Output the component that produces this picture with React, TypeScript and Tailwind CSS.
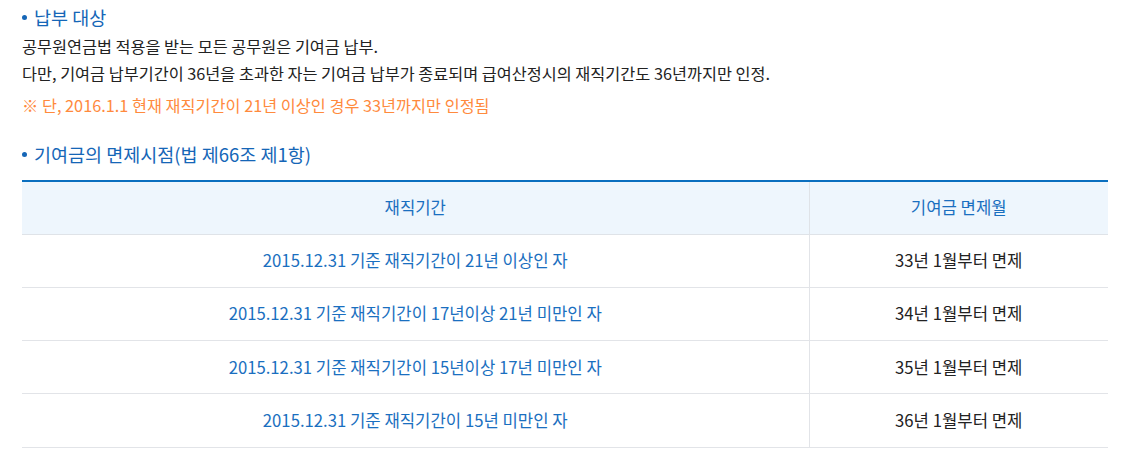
const FONT = { fontFamily: '"Noto Sans CJK KR", "Noto Sans", sans-serif' };

const ROWS = [
  ["2015.12.31 기준 재직기간이 21년 이상인 자", "33년 1월부터 면제"],
  ["2015.12.31 기준 재직기간이 17년이상 21년 미만인 자", "34년 1월부터 면제"],
  ["2015.12.31 기준 재직기간이 15년이상 17년 미만인 자", "35년 1월부터 면제"],
  ["2015.12.31 기준 재직기간이 15년 미만인 자", "36년 1월부터 면제"],
];

function Heading({ children }: { children: React.ReactNode }) {
  return (
    <h3 className="flex items-center gap-[7px] text-[18.5px] font-normal leading-[26px] text-[#1566b7]">
      <span className="h-[5px] w-[5px] rounded-full bg-[#1566b7]" />
      {children}
    </h3>
  );
}

export default function App() {
  return (
    <div className="min-h-screen bg-white px-[22px] pt-[4px]" style={FONT}>
      <Heading>납부 대상</Heading>
      <div className="mt-[3px] text-[16.3px] leading-[27px] text-[#222]">
        <p>공무원연금법 적용을 받는 모든 공무원은 기여금 납부.</p>
        <p>다만, 기여금 납부기간이 36년을 초과한 자는 기여금 납부가 종료되며 급여산정시의 재직기간도 36년까지만 인정.</p>
        <p className="mt-[5px] text-[#ff8a3d]">※ 단, 2016.1.1 현재 재직기간이 21년 이상인 경우 33년까지만 인정됨</p>
      </div>
      <div className="mt-[22px]">
        <Heading>기여금의 면제시점(법 제66조 제1항)</Heading>
      </div>
      <table className="mt-[13px] w-[1086px] border-collapse border-t-2 border-[#0a6fbf] text-[16.7px]">
        <thead>
          <tr className="h-[53px] bg-[#eef6fd] text-[#1a6fc0]">
            <th className="w-[787px] border-b border-r border-[#dfe3e8] font-normal">재직기간</th>
            <th className="border-b border-[#dfe3e8] font-normal">기여금 면제월</th>
          </tr>
        </thead>
        <tbody>
          {ROWS.map(([a, b]) => (
            <tr key={a} className="h-[53.3px]">
              <td className="border-b border-r border-[#e2e4e8] text-center text-[#1a6fc0]">{a}</td>
              <td className="border-b border-[#e2e4e8] text-center text-[#222]">{b}</td>
            </tr>
          ))}
        </tbody>
      </table>
    </div>
  );
}
